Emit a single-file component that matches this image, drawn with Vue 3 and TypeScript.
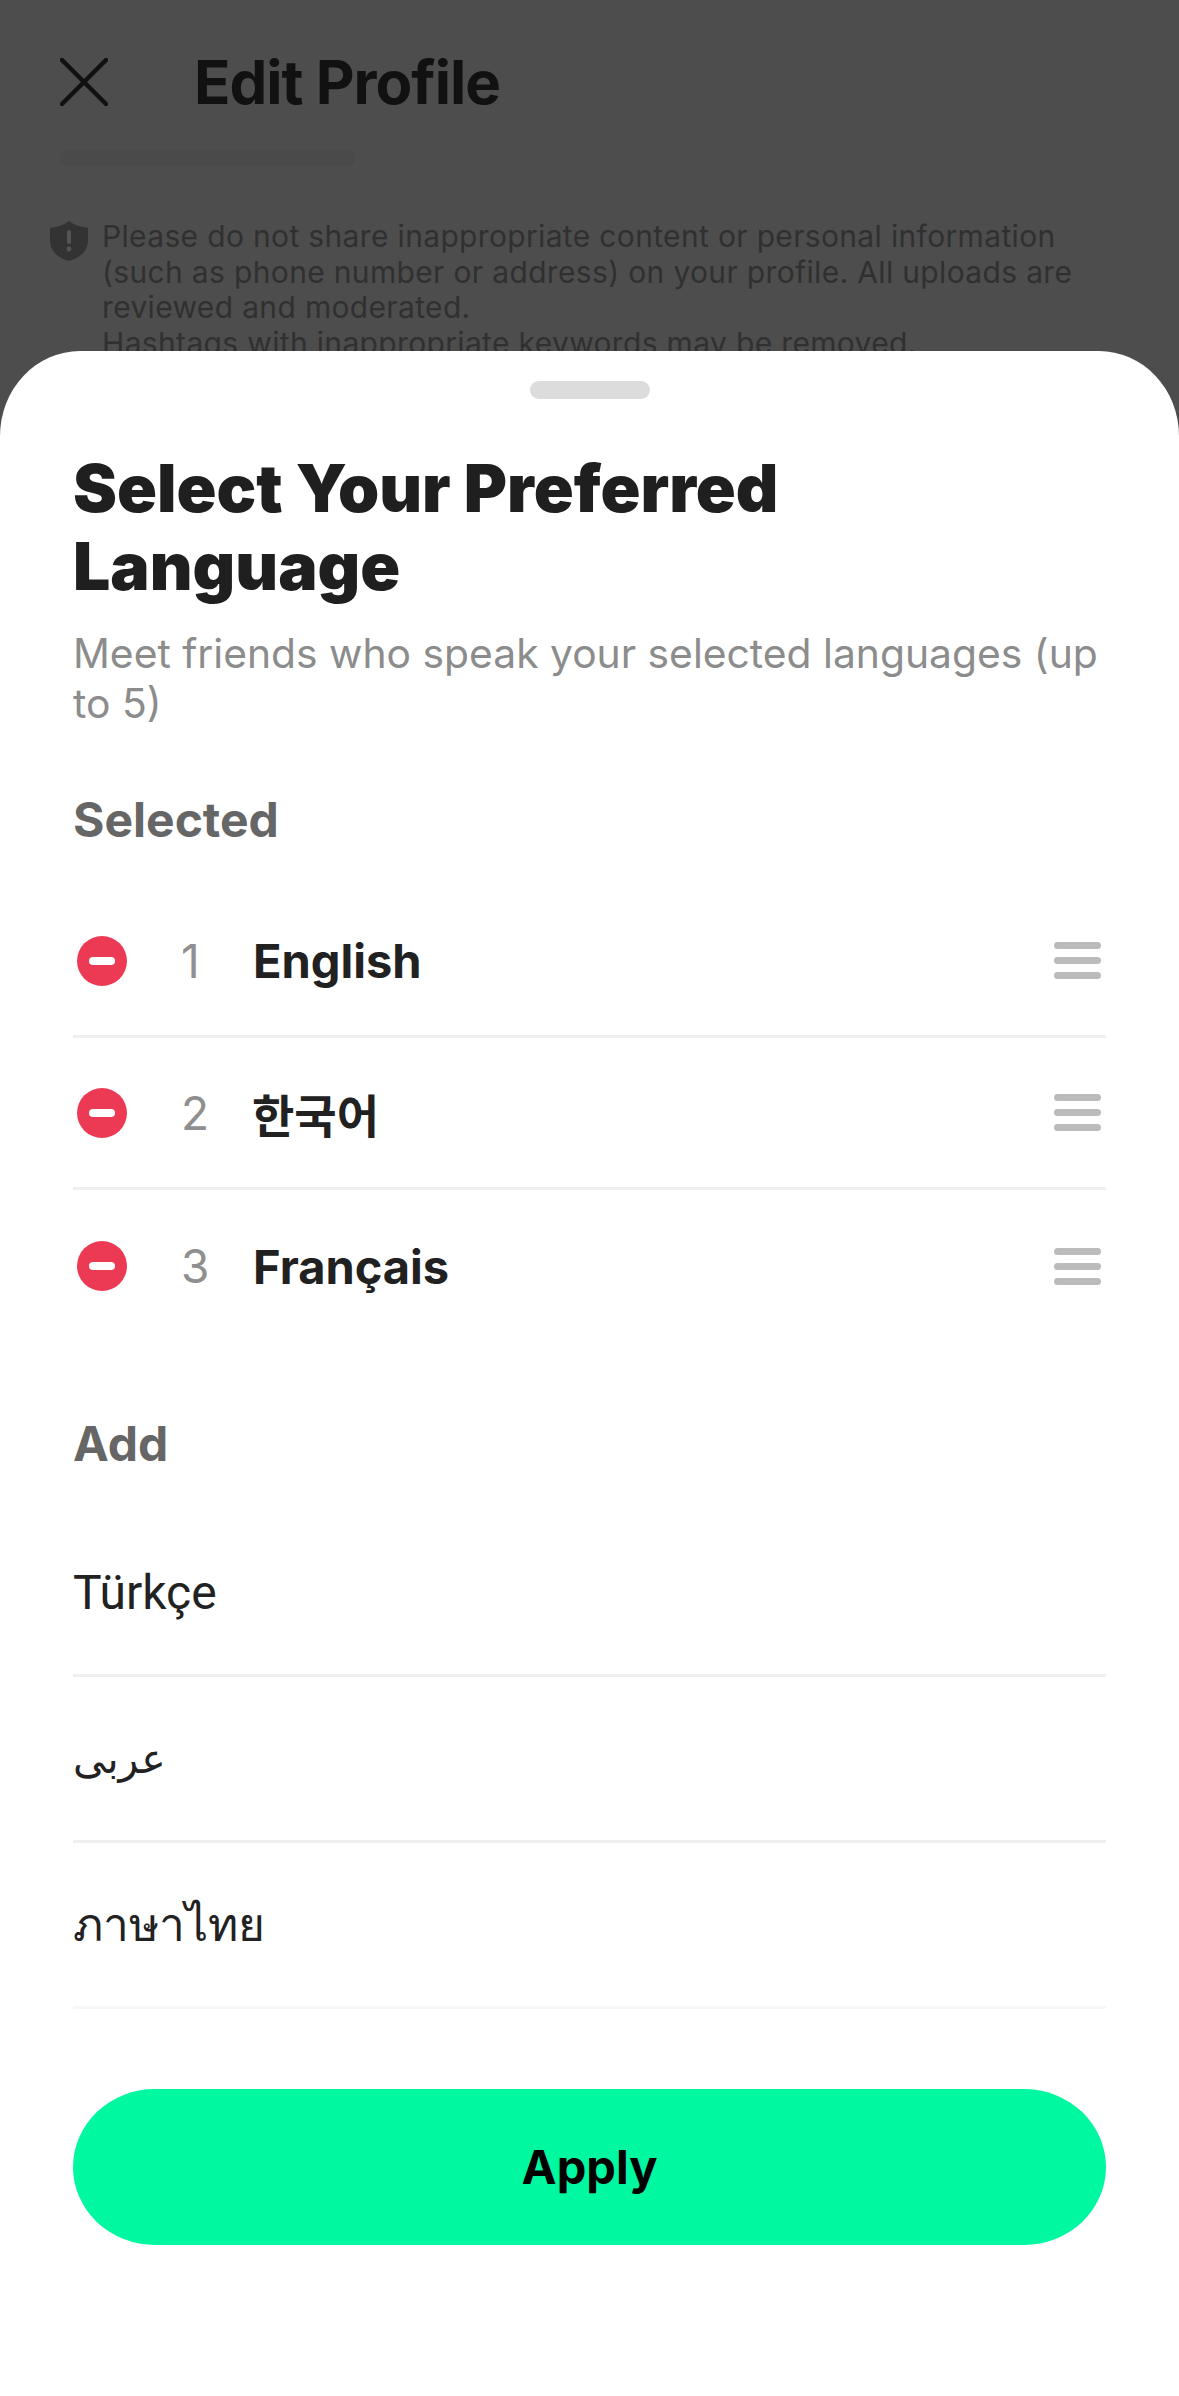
<script setup lang="ts">
const selected = [
  { text: 'English', cls: '' },
  { text: '한국어', cls: 'ko' },
  { text: 'Français', cls: '' },
];
const extra = [
  { text: 'Türkçe', cls: '' },
  { text: 'عربی', cls: 'ar' },
  { text: 'ภาษาไทย', cls: 'th' },
];
</script>

<template>
  <div class="page">
    <header class="top">
      <svg class="close" viewBox="0 0 48 48" width="48" height="48">
        <path d="M2 2 46 46M46 2 2 46" stroke="#111" stroke-width="4.5" stroke-linecap="round" fill="none" />
      </svg>
      <h2 class="top-title">Edit Profile</h2>
    </header>
    <div class="ghost-bar"></div>
    <div class="notice">
      <svg class="shield" viewBox="0 0 38 40" width="38" height="40">
        <path d="M19 0C24 4 31 6 38 7V19C38 30 30 37 19 40 8 37 0 30 0 19V7C7 6 14 4 19 0Z" fill="#333" />
        <rect x="17" y="9" width="4" height="14" rx="2" fill="#555" />
        <circle cx="19" cy="28" r="2.4" fill="#555" />
      </svg>
      <p class="notice-text">
        Please do not share inappropriate content or personal information (such as phone number or address) on your profile. All uploads are reviewed and moderated.<br />Hashtags with inappropriate keywords may be removed.
      </p>
    </div>

    <section class="sheet">
      <div class="handle"></div>
      <h1 class="title">Select Your Preferred<br />Language</h1>
      <p class="sub">Meet friends who speak your selected languages (up to 5)</p>

      <h3 class="label selected-label">Selected</h3>
      <ul class="list selected-list">
        <li v-for="(lang, i) in selected" :key="lang.text" class="row">
          <svg class="minus" viewBox="0 0 50 50" width="50" height="50">
            <circle cx="25" cy="25" r="25" fill="#ec3a55" />
            <rect x="12" y="21" width="26" height="8" rx="4" fill="#fff" />
          </svg>
          <span class="num">{{ i + 1 }}</span>
          <span class="name" :class="lang.cls">{{ lang.text }}</span>
          <span class="grip"><i></i><i></i><i></i></span>
        </li>
      </ul>

      <h3 class="label add-label">Add</h3>
      <ul class="list add-list">
        <li v-for="lang in extra" :key="lang.text" class="add-row" :class="lang.cls">{{ lang.text }}</li>
      </ul>

      <button class="apply">Apply</button>
    </section>
  </div>
</template>

<style>
html,
body {
  margin: 0;
  background: #fff;
}
</style>

<style scoped>
.page {
  position: relative;
  width: 1179px;
  height: 2396px;
  overflow: hidden;
  background: #4d4d4d;
  font-family: Inter, "Noto Sans", "DejaVu Sans", "Noto Sans CJK KR", sans-serif;
}
.top {
  display: flex;
  align-items: center;
  gap: 86px;
  padding: 58px 0 0 60px;
}
.close {
  flex: none;
}
.top-title {
  margin: 0;
  font-size: 60px;
  line-height: 48px;
  font-weight: 700;
  color: #111;
  letter-spacing: -1px;
}
.ghost-bar {
  width: 295px;
  height: 16px;
  margin: 44px 0 0 60px;
  border-radius: 8px;
  background: #4a4a4a;
}
.notice {
  display: flex;
  gap: 14px;
  margin: 55px 0 0 50px;
}
.shield {
  flex: none;
}
.notice-text {
  width: 1010px;
  margin: -2px 0 0;
  font-size: 30px;
  line-height: 35.5px;
  color: #303030;
  letter-spacing: 0.34px;
}
.sheet {
  position: absolute;
  left: 0;
  right: 0;
  top: 351px;
  bottom: 0;
  box-sizing: border-box;
  padding: 30px 73px 0;
  background: #fff;
  border-radius: 80px 80px 0 0 / 85px 85px 0 0;
  color: #212121;
}
.handle {
  width: 120px;
  height: 18px;
  margin: 0 auto;
  border-radius: 9px;
  background: #dcdcdc;
}
.title {
  margin: 50px 0 0;
  font-size: 66px;
  line-height: 78px;
  font-weight: 900;
  color: #1f1f1f;
}
.sub {
  margin: 23px 0 0;
  font-size: 40.8px;
  line-height: 50px;
  color: #8c8c8c;
}
.label {
  margin: 0;
  font-size: 48px;
  line-height: 56px;
  font-weight: 700;
  color: #666;
}
.selected-label {
  margin-top: 64px;
}
.add-label {
  margin-top: 74px;
}
.list {
  margin: 0;
  padding: 0;
  list-style: none;
}
.selected-list {
  margin-top: 38px;
}
.row {
  display: flex;
  align-items: center;
  height: 152px;
  border-bottom: 3px solid #efefef;
  box-sizing: border-box;
}
.row:last-child {
  border-bottom: none;
}
.minus {
  flex: none;
  margin-left: 4px;
}
.num {
  width: 126px;
  padding-left: 54px;
  box-sizing: border-box;
  font-size: 46px;
  color: #8f8f8f;
}
.name {
  flex: 1;
  font-size: 47px;
  font-weight: 700;
  color: #212121;
}
.name.ko {
  font-size: 46px;
  font-weight: 600;
  margin-left: -1px;
}
.grip {
  display: flex;
  flex-direction: column;
  gap: 8px;
  margin-right: 5px;
}
.grip i {
  display: block;
  width: 47px;
  height: 7px;
  border-radius: 4px;
  background: #bbb;
}
.add-list {
  margin-top: 39px;
}
.add-row {
  display: flex;
  align-items: center;
  height: 166px;
  box-sizing: border-box;
  border-bottom: 3px solid #efefef;
  font-family: Roboto, "Noto Sans", "DejaVu Sans", sans-serif;
  font-size: 48px;
  color: #222;
}
.add-row.ar {
  font-size: 41px;
}
.add-row.th {
  font-size: 46px;
}
.add-row:last-child {
  border-bottom-color: #f7f7f7;
}
.apply {
  display: block;
  width: 100%;
  height: 156px;
  margin-top: 80px;
  padding: 0 0 2px;
  border: none;
  border-radius: 82px / 78px;
  background: #00f8a0;
  color: #000;
  font: 700 47px Inter, "Noto Sans", sans-serif;
}
</style>
